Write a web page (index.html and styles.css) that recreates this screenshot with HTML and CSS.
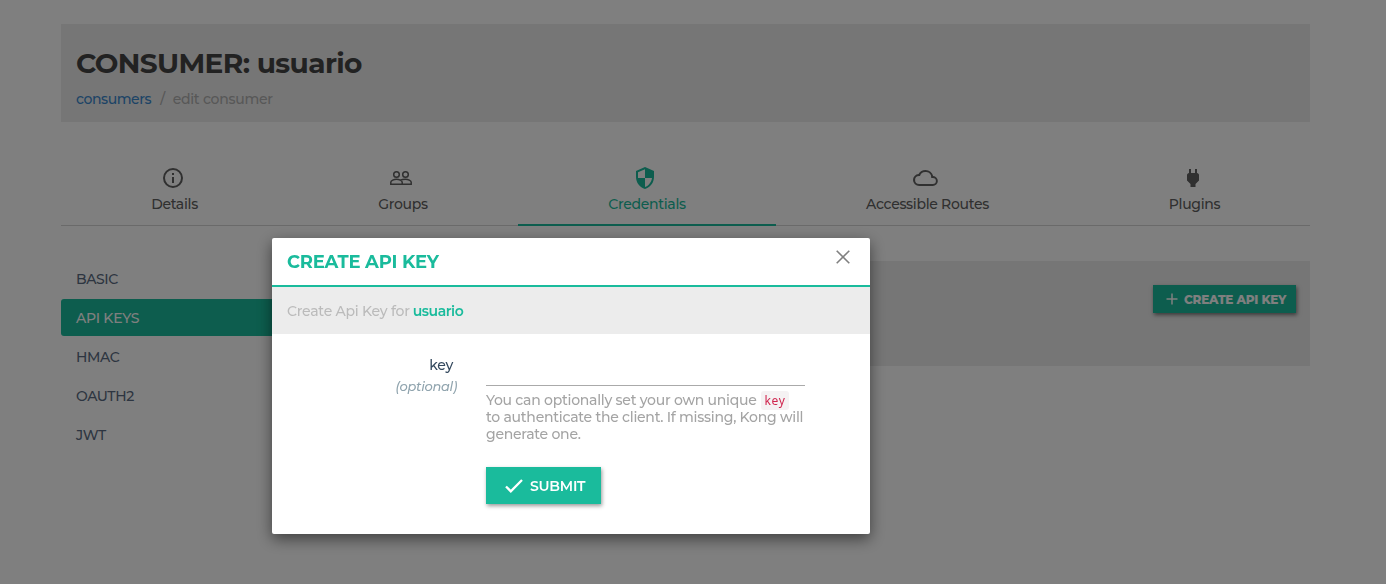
FILE: index.html
```html
<!DOCTYPE html>
<html lang="en">
<head>
<meta charset="utf-8">
<title>Consumer: usuario</title>
<link rel="stylesheet" href="styles.css">
</head>
<body>
<main class="page">
  <header class="page-header">
    <h1 class="title">CONSUMER: usuario</h1>
    <nav class="breadcrumb"><a class="crumb-link">consumers</a><span class="crumb-sep">/</span><span class="crumb-current">edit consumer</span></nav>
  </header>

  <nav class="tabs">
    <a class="tab">
      <svg class="icon" width="24" height="24" viewBox="0 0 24 24"><path d="M11 9h2V7h-2v2zm1 11a8 8 0 1 1 0-16 8 8 0 0 1 0 16zm0-18a10 10 0 1 0 0 20 10 10 0 0 0 0-20zm-1 15h2v-6h-2v6z"/></svg>
      <span>Details</span>
    </a>
    <a class="tab">
      <svg class="icon icon-line" width="24" height="24" viewBox="0 0 24 24"><circle cx="7.5" cy="8.500" r="2.8"/><circle cx="16.500" cy="8.500" r="2.8"/><path d="M1.8 18.2V16.3C1.8 14.5 5 13.3 7.5 13.3S13.2 14.5 13.2 16.3V18.2ZM11.2 14.1C12.5 13.6 14.8 13.3 16.5 13.3 19 13.3 22.2 14.5 22.2 16.3V18.2H13.2"/></svg>
      <span>Groups</span>
    </a>
    <a class="tab tab-active">
      <svg class="icon" width="24" height="24" viewBox="0 0 24 24"><path d="M12 1 3 5v6c0 5.55 3.84 10.74 9 12 5.16-1.26 9-6.45 9-12V5l-9-4zm0 11h7c-.53 4.12-3.28 7.79-7 8.94V12H5V6.3l7-3.11V12z"/></svg>
      <span>Credentials</span>
    </a>
    <a class="tab">
      <svg class="icon" width="25" height="24" viewBox="0 0 24 24" preserveAspectRatio="none"><path d="M19 18H6a4 4 0 0 1-4-4 4 4 0 0 1 4-4h.71a5.5 5.5 0 0 1 10.79 1.5v.5H19a3 3 0 0 1 0 6m.35-7.97A7.49 7.49 0 0 0 12 4a7.49 7.49 0 0 0-6.65 4.04A5.99 5.99 0 0 0 0 14a6 6 0 0 0 6 6h13a5 5 0 0 0 .35-9.97z"/></svg>
      <span>Accessible Routes</span>
    </a>
    <a class="tab">
      <svg class="icon" width="24" height="24" viewBox="0 0 24 24"><path d="M16 7V3h-2v4h-4V3H8v4C7 7 6 8 6 9v5.500L9.500 18v3h5v-3l3.500-3.500V9c0-1-1-2-2-2z"/></svg>
      <span>Plugins</span>
    </a>
  </nav>

  <div class="columns">
    <nav class="side">
      <a class="side-item">BASIC</a>
      <a class="side-item side-active">API KEYS</a>
      <a class="side-item">HMAC</a>
      <a class="side-item">OAUTH2</a>
      <a class="side-item">JWT</a>
    </nav>
    <section class="panel">
      <button class="create-btn">
        <svg width="12" height="12" viewBox="0 0 12 12"><path d="M6 .5v11M.5 6h11" stroke="currentColor" stroke-width="1.5"/></svg>
        <span>CREATE API KEY</span>
      </button>
    </section>
  </div>
</main>

<div class="backdrop">
  <div class="modal">
    <div class="modal-header">
      <h2 class="modal-title">CREATE API KEY</h2>
      <svg class="close" width="14" height="14" viewBox="0 0 14 14"><path d="M.7.7l12.600 12.600M13.300.7L.7 13.300" stroke="currentColor" stroke-width="1.600"/></svg>
    </div>
    <div class="modal-sub"><span>Create Api Key for</span><span class="sub-name">usuario</span></div>
    <form class="form">
      <div class="label"><span class="label-name">key</span><em class="label-opt">(optional)</em></div>
      <div class="field">
        <div class="input"></div>
        <div class="help">
          <div class="help-row"><span>You can optionally set your own unique</span><code class="code">key</code></div>
          <div class="help-row"><span>to authenticate the client. If missing, Kong will</span></div>
          <div class="help-row"><span>generate one.</span></div>
        </div>
        <button type="button" class="submit">
          <svg width="18" height="14" viewBox="0 0 18 14"><path d="M1 7.500l4.800 4.800L17 1" fill="none" stroke="currentColor" stroke-width="2.300"/></svg>
          <span>SUBMIT</span>
        </button>
      </div>
    </form>
  </div>
</div>
</body>
</html>
```
FILE: styles.css
```css
* { box-sizing: border-box; }
body {
  margin: 0;
  height: 584px;
  overflow: hidden;
  background: #fff;
  font: 500 14px/20px Montserrat, Inter, sans-serif;
  letter-spacing: -.3px;
  color: #606060;
}
h1, h2 { margin: 0; }
span, em { white-space: nowrap; }
button { border: 0; font-family: inherit; letter-spacing: inherit; }
.page { padding: 24px 76px 0 61px; }
.page-header { height: 98px; padding: 22px 15px 0; background: #ececec; }
.title { font-size: 28px; line-height: 34px; font-weight: 700; color: #444; letter-spacing: -.62px; }
.breadcrumb { display: flex; margin-top: 9px; letter-spacing: -.42px; }
.crumb-link { color: #3a88cc; }
.crumb-sep { color: #b0b0b0; padding: 0 8px 0 9px; }
.crumb-current { color: #b0b0b0; letter-spacing: -.25px; }

.tabs {
  display: grid;
  grid-template-columns: 227px 230px 258px 303px 231px;
  height: 104px;
  padding-top: 28px;
  border-bottom: 1px solid #d4d4d4;
}
.tab {
  display: flex;
  flex-direction: column;
  align-items: center;
  height: 76px;
  padding-top: 16px;
}
.tab .icon { margin: 0 4px 4px 0; }
.tab-active { color: #1abb9c; border-bottom: 2px solid #1abb9c; }
.icon { fill: currentColor; }
.icon-line { fill: none; stroke: currentColor; stroke-width: 1.5; }

.columns { display: grid; grid-template-columns: 282px 1fr; gap: 30px; padding-top: 34px; }
.side { display: flex; flex-direction: column; gap: 2px; }
.side-item {
  height: 37px;
  padding: 9px 15px;
  border-radius: 3px;
  color: #5a6b82;
  letter-spacing: -.4px;
}
.side-active { background: #1abb9c; color: #fff; letter-spacing: -.25px; }
.panel { display: flex; justify-content: flex-end; height: 105px; margin-top: 1px; padding: 24px 14px 0; background: #ececec; }
.create-btn {
  display: flex;
  align-items: center;
  gap: 6px;
  width: 143px;
  height: 28px;
  padding: 0 0 0 13px;
  background: #1abb9c;
  color: #fff;
  font-size: 12px;
  font-weight: 800;
  letter-spacing: -.2px;
  box-shadow: 1px 2px 4px rgba(0, 0, 0, .5);
}

.backdrop { position: fixed; inset: 0; padding: 238px 0 0 272px; background: rgba(0, 0, 0, .5); }
.modal { width: 598px; height: 296px; background: #fff; border-radius: 2px; box-shadow: 0 5px 15px rgba(0, 0, 0, .5); }
.modal-header {
  display: flex;
  justify-content: space-between;
  height: 49px;
  padding: 12px 20px 0 15px;
  border-bottom: 2px solid #1abb9c;
}
.modal-title { font-size: 18px; line-height: 24px; font-weight: 700; color: #1abb9c; letter-spacing: -.24px; }
.close { color: #808080; }
.modal-sub { display: flex; gap: 3px; height: 47px; padding: 14px 15px; background: #ececec; color: #bbb; letter-spacing: -.24px; }
.sub-name { color: #1abb9c; font-weight: 600; letter-spacing: -.42px; }
.form { display: grid; grid-template-columns: 186px 319px; gap: 28px; padding-top: 21px; }
.label { display: flex; flex-direction: column; align-items: flex-end; }
.label-name { margin-right: 5px; color: #34495e; }
.label-opt { margin: 2px 1px 0 0; font-size: 13px; line-height: 18px; color: #90a4ae; }
.input { height: 31px; border-bottom: 1px solid #aaa; }
.help { padding-top: 6px; color: #a4a4a4; letter-spacing: -.25px; }
.help-row { display: flex; gap: 4px; height: 17px; line-height: 17px; }
.code { height: 19px; margin-top: -1px; padding: 1px 4px; border-radius: 3px; background: #f5f2f3; color: #d0254e; font: 12px/18px "Noto Sans", sans-serif; letter-spacing: .6px; }
.submit {
  display: flex;
  align-items: center;
  gap: 7px;
  width: 115px;
  height: 37px;
  margin-top: 24px;
  padding: 0 0 0 19px;
  background: #1abb9c;
  color: #fff;
  font-size: 14px;
  font-weight: 600;
  letter-spacing: -.25px;
  box-shadow: 1px 2px 4px rgba(0, 0, 0, .4);
}
```
